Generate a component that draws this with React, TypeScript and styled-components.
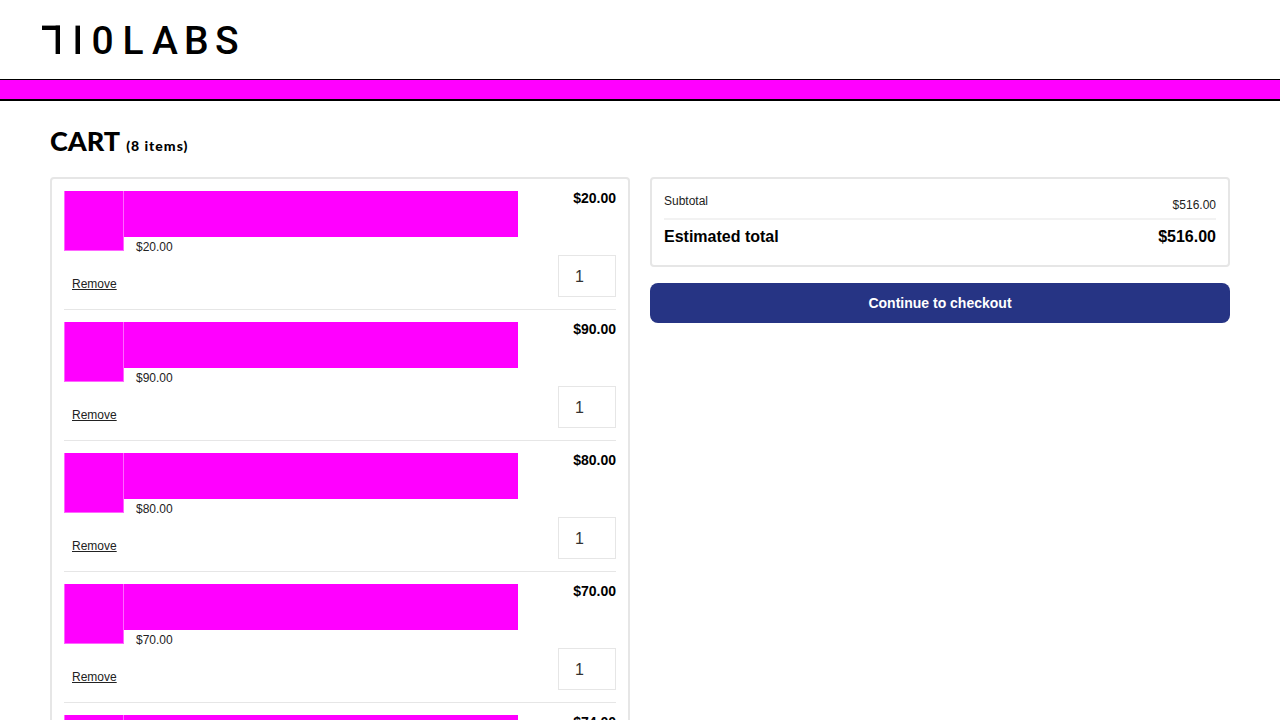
import React from "react";
import styled, { createGlobalStyle } from "styled-components";

const GlobalStyle = createGlobalStyle`
  *, *::before, *::after { box-sizing: border-box; }
  body {
    margin: 0;
    background: #fff;
    color: #222;
    font-family: "Liberation Sans", Arial, sans-serif;
    font-size: 12px;
    line-height: 16px;
  }
`;

const Header = styled.header`
  display: flex;
  align-items: center;
  height: 79px;
  padding: 0 42px;
`;

const LogoLink = styled.a`
  display: block;
  color: #000;
  svg { display: block; }
`;

const Banner = styled.div`
  height: 22px;
  background: #f0f;
  border-top: 1px solid #000;
  border-bottom: 2px solid #000;
`;

const Page = styled.main`
  padding: 23px 50px;
`;

const Title = styled.h1`
  display: flex;
  align-items: baseline;
  gap: 6px;
  margin: 0 0 14px;
  color: #000;
  font-family: Lato, sans-serif;
  font-size: 27px;
  font-weight: 900;
  line-height: 34px;
`;

const Count = styled.span`
  font-size: 14px;
  letter-spacing: 1px;
`;

const Columns = styled.div`
  display: grid;
  grid-template-columns: 1fr 1fr;
  align-items: start;
  gap: 20px;
`;

const Card = styled.section`
  padding: 12px;
  border: 2px solid #e6e6e6;
  border-radius: 4px;
`;

const ItemList = styled.ul`
  display: grid;
  gap: 12px;
  margin: 0;
  padding: 0;
  list-style: none;
`;

const Item = styled.li`
  padding-bottom: 12px;
  border-bottom: 1px solid #e6e6e6;
`;

const ItemTop = styled.div`
  display: grid;
  grid-template-columns: 60px 1fr 98px;
  height: 64px;
`;

const Thumb = styled.div`
  height: 60px;
  background: #f0f;
  border: 1px solid #ff66ff;
  border-top: 0;
`;

const NameBlock = styled.div`
  height: 46px;
  background: #f0f;
`;

const UnitPrice = styled.div`
  padding: 2px 12px;
`;

const LinePrice = styled.strong`
  color: #000;
  font-size: 14px;
  line-height: 14px;
  text-align: right;
`;

const ItemBottom = styled.div`
  display: flex;
  align-items: center;
  justify-content: space-between;
  padding-left: 8px;
`;

const RemoveLink = styled.a`
  padding-top: 16px;
  color: #222;
  text-decoration: underline;
`;

const Quantity = styled.input`
  width: 58px;
  height: 42px;
  padding: 2px 16px 0;
  border: 1px solid #e6e6e6;
  border-radius: 0;
  background: #fff;
  color: #333;
  font: 16px "Liberation Sans", Arial, sans-serif;
`;

const Summary = styled.aside`
  display: grid;
  gap: 16px;
`;

const Totals = styled.dl`
  margin: 0;
`;

const TotalRow = styled.div<{ $strong?: boolean }>`
  display: flex;
  justify-content: space-between;
  height: ${(p) => (p.$strong ? "33px" : "29px")};
  padding-top: ${(p) => (p.$strong ? "9px" : "2px")};
  border-bottom: ${(p) => (p.$strong ? "0" : "2px solid #f2f2f2")};
  color: ${(p) => (p.$strong ? "#000" : "#222")};
  font-size: ${(p) => (p.$strong ? "16px" : "12px")};
  font-weight: ${(p) => (p.$strong ? 700 : 400)};

  dd {
    margin: 0;
    padding-top: ${(p) => (p.$strong ? "0" : "4px")};
  }
`;

const CheckoutButton = styled.button`
  height: 40px;
  border: 0;
  border-radius: 8px;
  background: #263484;
  color: #fff;
  font: bold 14px "Liberation Sans", Arial, sans-serif;
  cursor: pointer;
`;

const items = [
  { id: 1, price: "$20.00" },
  { id: 2, price: "$90.00" },
  { id: 3, price: "$80.00" },
  { id: 4, price: "$70.00" },
  { id: 5, price: "$74.00" },
];

function Logo() {
  return (
    <svg width="208" height="48" viewBox="0 0 208 48" role="img" aria-label="710 Labs">
      <rect x="0" y="9.6" width="18" height="4.4" />
      <rect x="13.6" y="9.6" width="4.4" height="28.4" />
      <rect x="33.5" y="9.6" width="4.5" height="28.4" />
      <text
        x="49.5 80.5 110 142 173"
        y="38"
        fill="#000"
        fontFamily="Roboto, sans-serif"
        fontSize="39"
        fontWeight="500"
      >
        0LABS
      </text>
    </svg>
  );
}

export default function App() {
  return (
    <>
      <GlobalStyle />
      <Header>
        <LogoLink href="#">
          <Logo />
        </LogoLink>
      </Header>
      <Banner />
      <Page>
        <Title>
          CART <Count>(8 items)</Count>
        </Title>
        <Columns>
          <Card>
            <ItemList>
              {items.map((item) => (
                <Item key={item.id}>
                  <ItemTop>
                    <Thumb />
                    <div>
                      <NameBlock />
                      <UnitPrice>{item.price}</UnitPrice>
                    </div>
                    <LinePrice>{item.price}</LinePrice>
                  </ItemTop>
                  <ItemBottom>
                    <RemoveLink href="#">Remove</RemoveLink>
                    <Quantity type="text" inputMode="numeric" defaultValue="1" aria-label="Quantity" />
                  </ItemBottom>
                </Item>
              ))}
            </ItemList>
          </Card>
          <Summary>
            <Card>
              <Totals>
                <TotalRow>
                  <dt>Subtotal</dt>
                  <dd>$516.00</dd>
                </TotalRow>
                <TotalRow $strong>
                  <dt>Estimated total</dt>
                  <dd>$516.00</dd>
                </TotalRow>
              </Totals>
            </Card>
            <CheckoutButton type="button">Continue to checkout</CheckoutButton>
          </Summary>
        </Columns>
      </Page>
    </>
  );
}
